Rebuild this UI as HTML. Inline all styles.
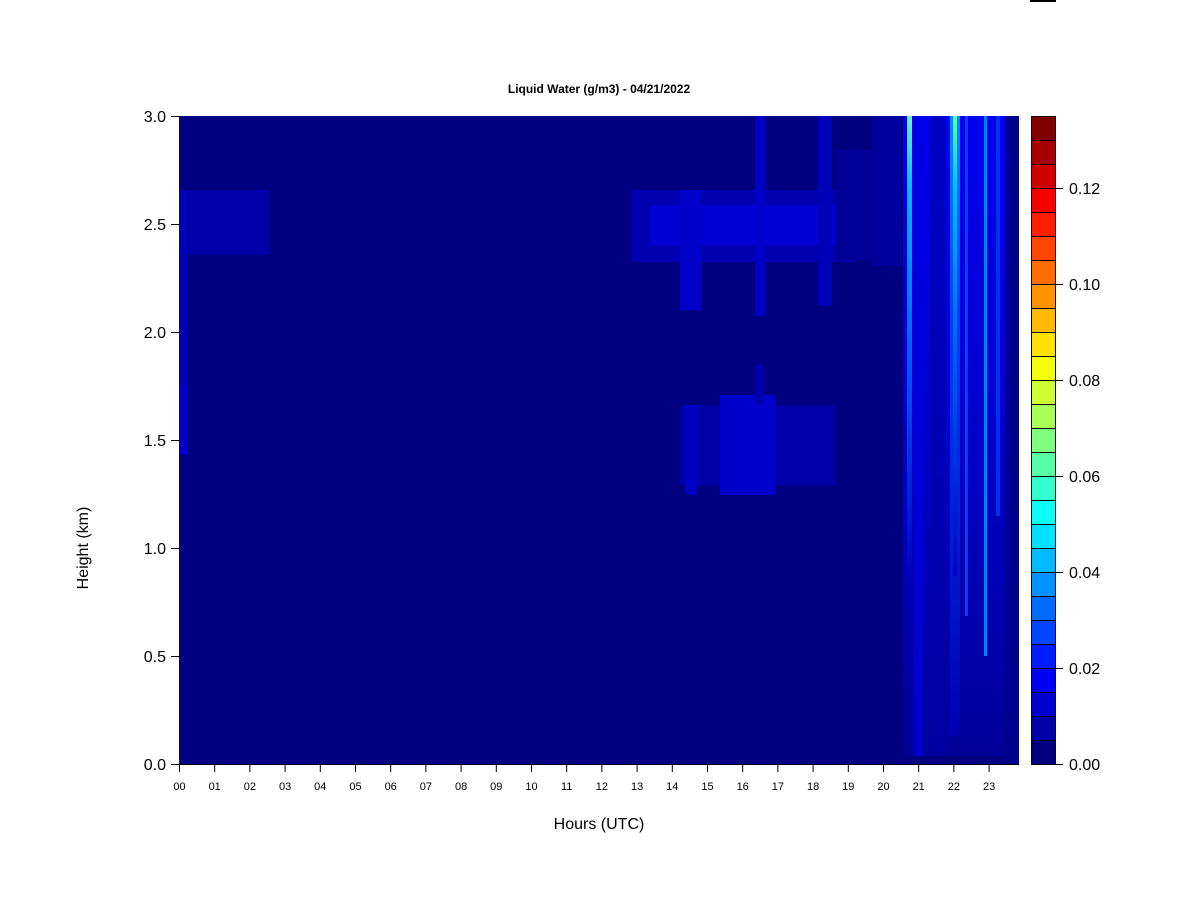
<!DOCTYPE html>
<html><head><style>
html,body{margin:0;padding:0;background:#fff;width:1200px;height:900px;overflow:hidden}
svg{display:block;font-family:"Liberation Sans",Arial,sans-serif}
</style></head><body>
<svg width="1200" height="900" viewBox="0 0 1200 900" xmlns="http://www.w3.org/2000/svg">
<defs>
<linearGradient id="fadeV" x1="0" y1="0" x2="0" y2="1">
<stop offset="0" stop-color="#0000F0"/><stop offset="0.45" stop-color="#0000D0"/><stop offset="1" stop-color="#000098"/>
</linearGradient>
<linearGradient id="cy1" x1="0" y1="0" x2="0" y2="1">
<stop offset="0" stop-color="#60FFB0"/><stop offset="0.15" stop-color="#00C0FF"/><stop offset="0.5" stop-color="#0060FF"/><stop offset="1" stop-color="#0000C0"/>
</linearGradient>
<linearGradient id="cy2" x1="0" y1="0" x2="0" y2="1">
<stop offset="0" stop-color="#0090FF"/><stop offset="0.3" stop-color="#0040FF"/><stop offset="1" stop-color="#0000B0"/>
</linearGradient>
</defs>
<rect x="1030" y="0" width="26" height="2" fill="#000"/>
<text x="599" y="93" text-anchor="middle" font-size="12" font-weight="bold">Liquid Water (g/m3) - 04/21/2022</text>
<rect x="179" y="116" width="840" height="648" fill="#000080"/>
<rect x="179" y="190" width="91" height="65" fill="#0000A8"/>
<rect x="179" y="190" width="8" height="260" fill="#0000B4"/>
<rect x="179" y="385" width="8" height="70" fill="#0000C8"/>
<rect x="632" y="190" width="223" height="72" fill="#0000B0"/>
<rect x="650" y="205" width="200" height="40" fill="#0000D4"/>
<rect x="680" y="190" width="22" height="120" fill="#0000C8"/>
<rect x="755" y="116" width="10" height="200" fill="#0000C8"/>
<rect x="818" y="116" width="14" height="190" fill="#0000B8"/>
<rect x="835" y="150" width="40" height="110" fill="#000098"/>
<rect x="680" y="405" width="155" height="80" fill="#0000A8"/>
<rect x="685" y="405" width="12" height="90" fill="#0000C4"/>
<rect x="720" y="395" width="55" height="100" fill="#0000CC"/>
<rect x="755" y="365" width="8" height="40" fill="#0000B0"/>
<rect x="872" y="116" width="30" height="150" fill="#00009C"/>
<rect x="903" y="116" width="107" height="640" fill="url(#fadeV)"/>
<rect x="913" y="116" width="10" height="640" fill="#0000E0" opacity="0.7"/>
<rect x="930" y="116" width="16" height="640" fill="#0000A8" opacity="0.6"/>
<rect x="907" y="116" width="5" height="460" fill="url(#cy1)"/>
<rect x="950" y="116" width="10" height="620" fill="url(#cy2)"/>
<rect x="953" y="116" width="4" height="460" fill="url(#cy1)"/>
<rect x="965" y="116" width="3" height="500" fill="#0050FF" opacity="0.8"/>
<rect x="984" y="116" width="3" height="540" fill="#0080FF"/>
<rect x="996" y="116" width="4" height="400" fill="#0030F0"/>
<rect x="1005" y="116" width="14" height="648" fill="#000090"/>
<g stroke="#000" stroke-width="1">
<line x1="179" y1="764.5" x2="1019" y2="764.5"/>
<line x1="171" y1="116.5" x2="179" y2="116.5"/>
<line x1="171" y1="224.5" x2="179" y2="224.5"/>
<line x1="171" y1="332.5" x2="179" y2="332.5"/>
<line x1="171" y1="440.5" x2="179" y2="440.5"/>
<line x1="171" y1="548.5" x2="179" y2="548.5"/>
<line x1="171" y1="656.5" x2="179" y2="656.5"/>
<line x1="171" y1="764.5" x2="179" y2="764.5"/>
</g>
<g font-size="16" text-anchor="end">
<text x="166" y="122">3.0</text><text x="166" y="230">2.5</text><text x="166" y="338">2.0</text>
<text x="166" y="446">1.5</text><text x="166" y="554">1.0</text><text x="166" y="662">0.5</text><text x="166" y="770">0.0</text>
</g>
<g id="xt" stroke="#000"></g>
<g font-size="11" text-anchor="middle" id="xl"></g>
<text x="599" y="829" text-anchor="middle" font-size="16">Hours (UTC)</text>
<text transform="translate(88,548) rotate(-90)" text-anchor="middle" font-size="16">Height (km)</text>
<g id="cb"></g>
<g font-size="16" id="cbl"></g>
</svg>
<script>
var ns="http://www.w3.org/2000/svg";
var xt=document.getElementById('xt'),xl=document.getElementById('xl');
for(var h=0;h<24;h++){var x=179.5+35.2*h;
var l=document.createElementNS(ns,'line');l.setAttribute('x1',x);l.setAttribute('x2',x);l.setAttribute('y1',764);l.setAttribute('y2',772);xt.appendChild(l);
var t=document.createElementNS(ns,'text');t.setAttribute('x',x);t.setAttribute('y',790);t.textContent=(h<10?'0':'')+h;xl.appendChild(t);}
var cols=["#000080","#0000A7","#0000CE","#0000F5","#001DFF","#0045FF","#006CFF","#0093FF","#00BAFF","#00E2FF","#0AFFF5","#31FFCE","#58FFA7","#80FF80","#A7FF58","#CEFF31","#F5FF0A","#FFE200","#FFBA00","#FF9300","#FF6C00","#FF4500","#FF1D00","#F50000","#CE0000","#A70000","#800000"];
var cb=document.getElementById('cb');
for(var i=0;i<27;i++){var r=document.createElementNS(ns,'rect');r.setAttribute('x',1031.5);r.setAttribute('y',764-24*(i+1)+0.5);r.setAttribute('width',24);r.setAttribute('height',24);r.setAttribute('fill',cols[i]);r.setAttribute('stroke','#000');r.setAttribute('stroke-width','1');cb.appendChild(r);}
var cbl=document.getElementById('cbl');
for(var k=0;k<7;k++){var y=764-96*k;
var l=document.createElementNS(ns,'line');l.setAttribute('x1',1055);l.setAttribute('x2',1063);l.setAttribute('y1',y+0.5);l.setAttribute('y2',y+0.5);l.setAttribute('stroke','#000');cbl.appendChild(l);
var t=document.createElementNS(ns,'text');t.setAttribute('x',1069);t.setAttribute('y',y+6);t.textContent=(0.02*k).toFixed(2);cbl.appendChild(t);}
</script>
</body></html>
